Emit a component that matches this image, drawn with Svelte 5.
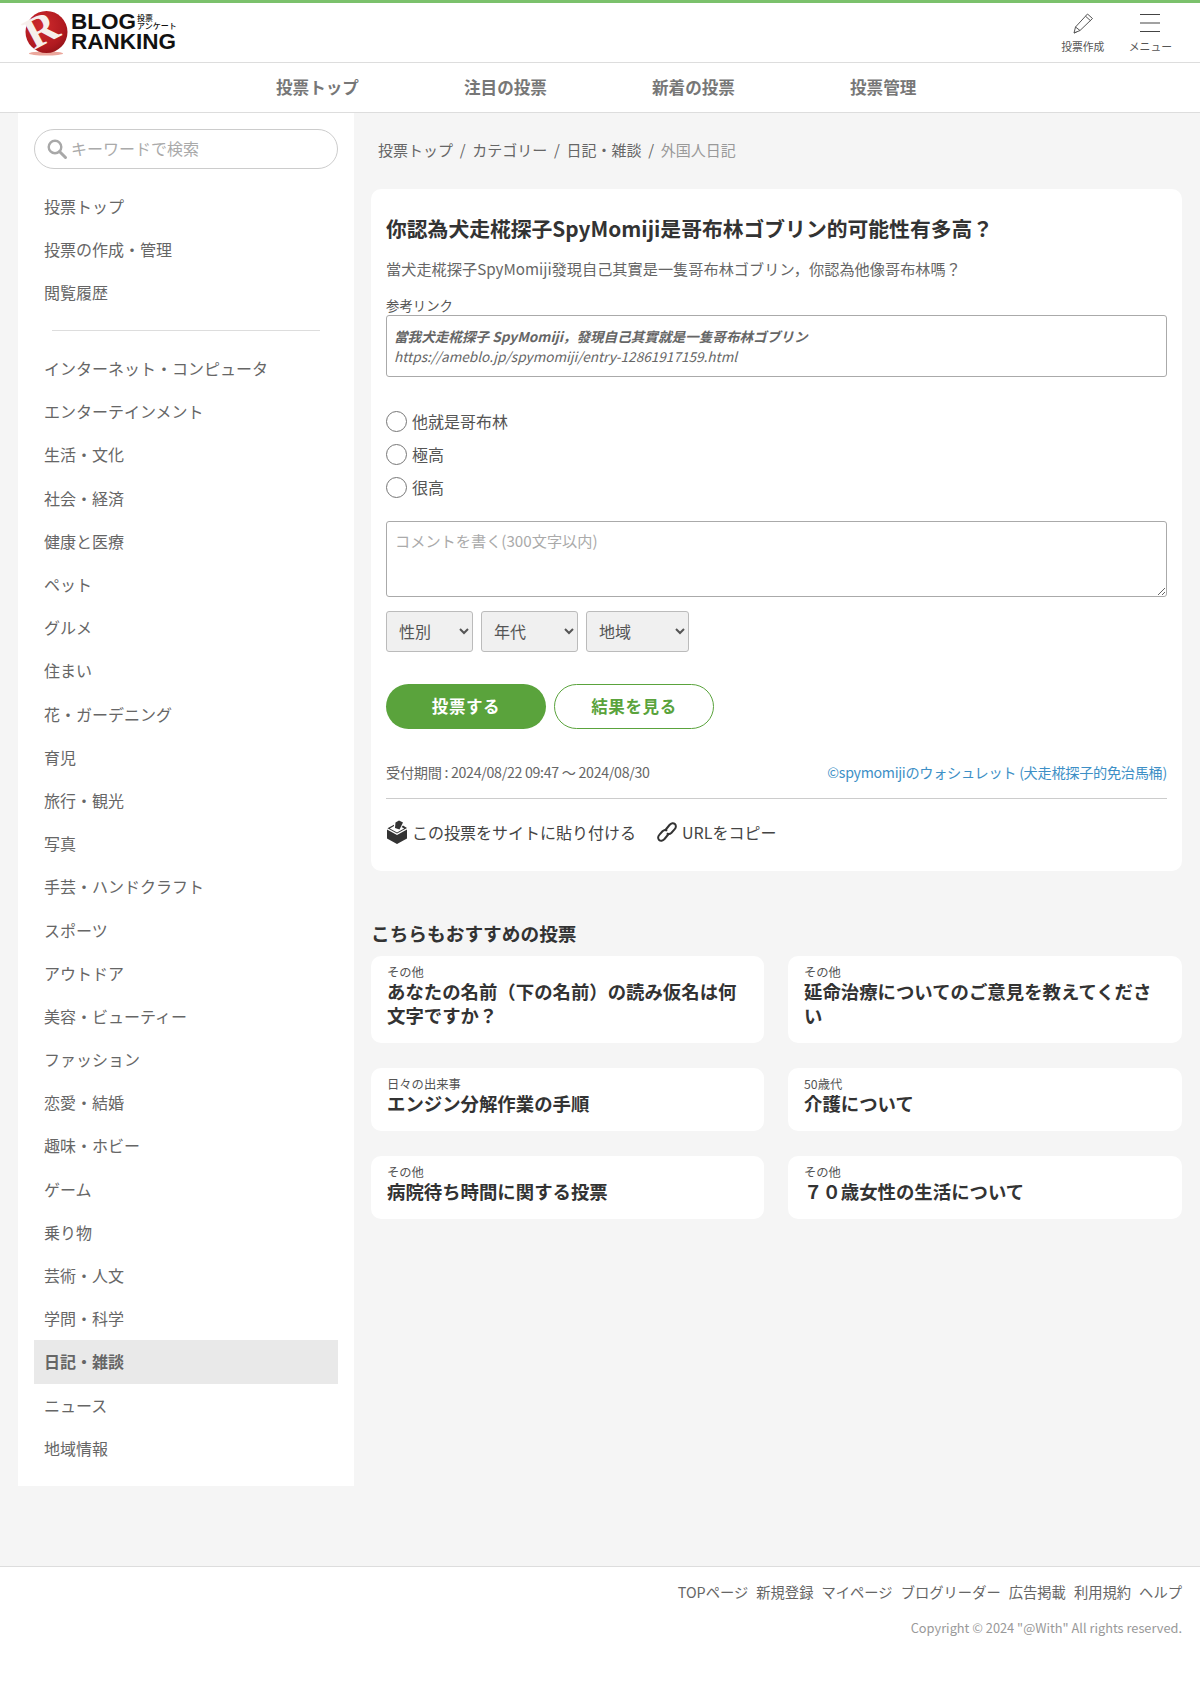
<script lang="ts">
  const navItems = ["投票トップ", "注目の投票", "新着の投票", "投票管理"];
  const topLinks = ["投票トップ", "投票の作成・管理", "閲覧履歴"];
  const categories = [
    "インターネット・コンピュータ", "エンターテインメント", "生活・文化", "社会・経済", "健康と医療", "ペット", "グルメ", "住まい",
    "花・ガーデニング", "育児", "旅行・観光", "写真", "手芸・ハンドクラフト", "スポーツ", "アウトドア", "美容・ビューティー",
    "ファッション", "恋愛・結婚", "趣味・ホビー", "ゲーム", "乗り物", "芸術・人文", "学問・科学", "日記・雑談", "ニュース", "地域情報",
  ];
  const choices = ["他就是哥布林", "極高", "很高"];
  const selects = [
    { label: "性別", cls: "narrow" },
    { label: "年代", cls: "mid" },
    { label: "地域", cls: "wide" },
  ];
  const related = [
    { cat: "その他", title: "あなたの名前（下の名前）の読み仮名は何文字ですか？" },
    { cat: "その他", title: "延命治療についてのご意見を教えてください" },
    { cat: "日々の出来事", title: "エンジン分解作業の手順" },
    { cat: "50歳代", title: "介護について" },
    { cat: "その他", title: "病院待ち時間に関する投票" },
    { cat: "その他", title: "７０歳女性の生活について" },
  ];
  const footerLinks = ["TOPページ", "新規登録", "マイページ", "ブログリーダー", "広告掲載", "利用規約", "ヘルプ"];
</script>

<div class="page">
  <header class="top">
    <a class="logo" href="#top">
      <svg class="ball" width="46" height="46" viewBox="0 0 46 46" aria-hidden="true">
        <defs>
          <radialGradient id="ball" cx="0.4" cy="0.35" r="0.75">
            <stop offset="0" stop-color="#cf2a2c" />
            <stop offset="0.7" stop-color="#b01a20" />
            <stop offset="1" stop-color="#8d1116" />
          </radialGradient>
        </defs>
        <ellipse cx="22" cy="43.500" rx="17" ry="2" fill="#eba79c" />
        <circle cx="22.500" cy="22" r="21" fill="url(#ball)" />
        <text x="0" y="0" transform="translate(10 40) rotate(-28)" class="mark">R</text>
      </svg>
      <span class="wordmark">
        <span class="line1">BLOG<span class="tiny"><span>投票</span><span>アンケート</span></span></span>
        <span class="line2">RANKING</span>
      </span>
    </a>
    <div class="tools">
      <a class="tool" href="#create">
        <svg width="22" height="22" viewBox="0 0 22 22" fill="none" stroke="#555" stroke-width="1" aria-hidden="true">
          <path d="M2 21l1.500-6L15.500 2l5 4.500L8 18.500z" />
          <path d="M3.500 15L8 18.500M13.500 4.200l5 4.500" />
          <path d="M2 21l2.500-1" />
        </svg>
        <span>投票作成</span>
      </a>
      <a class="tool menu" href="#menu">
        <svg width="20" height="22" viewBox="0 0 20 22" stroke="#444" stroke-width="1.100" aria-hidden="true">
          <path d="M0 2.500h20M0 11h20M0 19.500h20" />
        </svg>
        <span>メニュー</span>
      </a>
    </div>
  </header>

  <nav class="gnav">
    {#each navItems as item}
      <a href="#nav">{item}</a>
    {/each}
  </nav>

  <div class="body">
    <aside class="side">
      <div class="search">
        <svg width="22" height="22" viewBox="0 0 22 22" fill="none" stroke="#a8a8a8" aria-hidden="true">
          <circle cx="9" cy="9" r="6.300" stroke-width="2.400" />
          <path d="M13.500 13.500l6 6" stroke-width="3" stroke-linecap="round" />
        </svg>
        <span>キーワードで検索</span>
      </div>
      <ul class="links">
        {#each topLinks as link}
          <li>{link}</li>
        {/each}
      </ul>
      <hr />
      <ul class="links">
        {#each categories as cat}
          <li class:active={cat === "日記・雑談"}>{cat}</li>
        {/each}
      </ul>
    </aside>

    <main class="main">
      <div class="crumbs">
        <a href="#c">投票トップ</a><i>/</i><a href="#c">カテゴリー</a><i>/</i><a href="#c">日記・雑談</a><i>/</i><span>外国人日記</span>
      </div>

      <section class="card">
        <h1>你認為犬走椛探子SpyMomiji是哥布林ゴブリン的可能性有多高？</h1>
        <p class="desc">當犬走椛探子SpyMomiji發現自己其實是一隻哥布林ゴブリン，你認為他像哥布林嗎？</p>
        <div class="ref-label">参考リンク</div>
        <div class="ref">
          <b>當我犬走椛探子 SpyMomiji，發現自己其實就是一隻哥布林ゴブリン</b>
          <span>https://ameblo.jp/spymomiji/entry-12861917159.html</span>
        </div>

        <div class="choices">
          {#each choices as c}
            <label><input type="radio" name="vote" />{c}</label>
          {/each}
        </div>

        <textarea placeholder="コメントを書く(300文字以内)"></textarea>

        <div class="selects">
          {#each selects as s}
            <select class={s.cls}><option>{s.label}</option></select>
          {/each}
        </div>

        <div class="buttons">
          <button class="vote">投票する</button>
          <button class="result">結果を見る</button>
        </div>

        <div class="meta">
          <span>受付期間 : 2024/08/22 09:47 〜 2024/08/30</span>
          <a href="#owner">©spymomijiのウォシュレット (犬走椛探子的免治馬桶)</a>
        </div>

        <div class="share">
          <span class="share-item">
            <svg width="22" height="24" viewBox="0 0 22 24" aria-hidden="true">
              <path d="M1 9.500l10 5.500 10-5.500v9L11 24 1 18.500z" fill="#333" />
              <path d="M1.500 8.300L8 4.700V6L3.800 8.400l7.200 4 7.200-4-2.700-1.500L17 5.400 21 8l-10 5.600z" fill="#333" />
              <path d="M9 8l.5-5.500L13 .5l4 2-3.500 7z" fill="#333" />
            </svg>
            この投票をサイトに貼り付ける
          </span>
          <span class="share-item">
            <svg width="22" height="22" viewBox="0 0 22 22" fill="none" stroke="#333" stroke-width="2" aria-hidden="true">
              <path d="M9 9.500l4.500-5.500c1.800-2 4-2.200 5.400-.9s1.300 3.500-.4 5.300l-3 3.300c-1.500 1.500-3.300 1.700-4.600.5" />
              <path d="M13 12.500L8.500 18c-1.800 2-4 2.200-5.400.9s-1.300-3.500.4-5.300l3-3.300c1.500-1.500 3.300-1.700 4.600-.5" />
            </svg>
            URLをコピー
          </span>
        </div>
      </section>

      <h2>こちらもおすすめの投票</h2>
      <div class="related">
        {#each related as r}
          <article>
            <small>{r.cat}</small>
            <h3>{r.title}</h3>
          </article>
        {/each}
      </div>
    </main>
  </div>

  <footer class="foot">
    <div class="foot-links">
      {#each footerLinks as l}
        <a href="#f">{l}</a>
      {/each}
    </div>
    <div class="copy">Copyright © 2024 "@With" All rights reserved.</div>
  </footer>
</div>

<style>
  :global(body) {
    margin: 0;
    background: #fff;
  }
  .page {
    height: 1685px;
    background: #f5f5f5;
    color: #555;
    font-family: "Noto Sans CJK JP", "Noto Sans", sans-serif;
    font-size: 15px;
    overflow: hidden;
  }
  a {
    color: inherit;
    text-decoration: none;
  }
  .top {
    height: 59px;
    display: flex;
    align-items: flex-start;
    justify-content: space-between;
    padding: 0 24px;
    background: #fff;
    border-top: 3px solid #7bc16c;
    border-bottom: 1px solid #ddd;
  }
  .logo {
    display: flex;
    align-items: flex-start;
    gap: 2px;
    padding-top: 7px;
  }
  .ball {
    overflow: visible;
  }
  .mark {
    font-family: "Liberation Serif", serif;
    font-size: 44px;
    font-weight: 700;
    fill: #f6efec;
  }
  .wordmark {
    display: flex;
    flex-direction: column;
    color: #111;
    font-family: "Liberation Sans", sans-serif;
    font-weight: 700;
    margin-top: 2px;
    margin-left: -1px;
  }
  .line1 {
    display: flex;
    align-items: center;
    font-size: 22.500px;
    line-height: 20px;
    height: 20px;
  }
  .line2 {
    font-size: 22.500px;
    line-height: 20px;
    height: 20px;
  }
  .tiny {
    display: flex;
    flex-direction: column;
    margin-left: 1px;
    font-family: "Noto Sans CJK JP", sans-serif;
    font-size: 8px;
    font-weight: 500;
    line-height: 8px;
  }
  .tools {
    display: flex;
    gap: 24.500px;
    margin-right: 4px;
  }
  .tool {
    display: flex;
    flex-direction: column;
    align-items: center;
    gap: 5px;
    padding-top: 9px;
    font-size: 10.800px;
    line-height: 14px;
    color: #555;
  }
  .gnav {
    height: 50px;
    display: flex;
    align-items: center;
    padding-left: 276px;
    gap: 23px;
    padding-bottom: 1px;
    box-sizing: border-box;
    background: #fff;
    border-bottom: 1px solid #ddd;
  }
  .gnav a {
    width: 165px;
    font-size: 16.600px;
    font-weight: 700;
    color: #777;
  }
  .gnav a:nth-child(4) {
    margin-left: 10px;
  }
  .body {
    display: flex;
    align-items: flex-start;
    padding-left: 18px;
  }
  .side {
    width: 336px;
    box-sizing: border-box;
    height: 1373px;
    padding: 16px 16px 0;
    background: #fff;
  }
  .search {
    height: 40px;
    box-sizing: border-box;
    display: flex;
    align-items: center;
    gap: 3px;
    padding-left: 11px;
    border: 1px solid #ccc;
    border-radius: 20px;
    color: #aaa;
    font-size: 16px;
  }
  .search span {
    padding-bottom: 2px;
  }
  .links {
    list-style: none;
    margin: 0;
    padding: 0;
  }
  .side > .links:first-of-type {
    margin-top: 16px;
  }
  .links li {
    height: 43.200px;
    line-height: 43px;
    padding-left: 10px;
    color: #666;
    font-size: 16px;
  }
  .links li.active {
    background: #e9e9e9;
    font-weight: 700;
  }
  hr {
    margin: 15px 18px 16.500px 18px;
    border: 0;
    border-top: 1px solid #ddd;
  }
  .main {
    width: 811px;
    margin-left: 17px;
  }
  .crumbs {
    height: 76px;
    box-sizing: border-box;
    padding: 25px 0 0 7px;
    line-height: 24px;
    color: #666;
  }
  .crumbs i {
    font-style: normal;
    margin: 0 6.700px;
  }
  .crumbs span {
    color: #999;
  }
  .card {
    height: 682px;
    box-sizing: border-box;
    padding: 21px 15px 0;
    background: #fff;
    border-radius: 10px;
  }
  h1 {
    margin: 0;
    font-size: 20.800px;
    line-height: 36px;
    font-weight: 700;
    color: #333;
  }
  .desc {
    margin: 10px 0 0;
    font-size: 15.200px;
    line-height: 24px;
    color: #666;
  }
  .ref-label {
    margin-top: 15.500px;
    font-size: 13.400px;
    line-height: 19.500px;
    color: #555;
  }
  .ref {
    box-sizing: border-box;
    height: 62px;
    display: flex;
    flex-direction: column;
    justify-content: center;
    padding: 0 7px;
    border: 1px solid #aaa;
    border-radius: 3px;
    font-size: 13.600px;
    font-style: italic;
    line-height: 20px;
    color: #666;
  }
  .choices {
    display: flex;
    flex-direction: column;
    margin-top: 27px;
  }
  .choices label {
    display: flex;
    align-items: center;
    gap: 5px;
    height: 33.300px;
    font-size: 16px;
    color: #555;
  }
  .choices input {
    width: 21px;
    height: 21px;
    margin: 1px 0 0;
    flex: none;
  }
  textarea {
    display: block;
    width: 100%;
    height: 76px;
    box-sizing: border-box;
    margin-top: 17px;
    padding: 7px 8px;
    border: 1px solid #aaa;
    border-radius: 3px;
    background: #fff;
    font: inherit;
    font-size: 15.200px;
    line-height: 22px;
    outline: none;
  }
  textarea::placeholder {
    color: #aaa;
  }
  .selects {
    display: flex;
    gap: 8px;
    margin-top: 14px;
  }
  select {
    height: 41px;
    padding: 0 0 0 8px;
    border: 1px solid #bbb;
    border-radius: 3px;
    background: #f0f0f0;
    color: #555;
    font: inherit;
    font-size: 16px;
  }
  .narrow {
    width: 87px;
  }
  .mid {
    width: 97px;
  }
  .wide {
    width: 103px;
  }
  .buttons {
    display: flex;
    gap: 8px;
    margin-top: 32px;
  }
  .buttons button {
    width: 160px;
    height: 45px;
    border-radius: 23px;
    font: inherit;
    font-size: 16.500px;
    font-weight: 700;
    letter-spacing: 0.6px;
    cursor: pointer;
  }
  .vote {
    border: 0;
    background: #5aa33c;
    color: #fff;
  }
  .result {
    border: 1px solid #5aa33c;
    background: #fff;
    color: #5aa33c;
  }
  .meta {
    display: flex;
    justify-content: space-between;
    margin-top: 32px;
    padding-bottom: 15px;
    border-bottom: 1px solid #ccc;
    font-size: 14.200px;
    line-height: 22px;
    letter-spacing: -0.3px;
    color: #666;
  }
  .meta a {
    color: #3d8fc6;
  }
  .share {
    display: flex;
    gap: 20px;
    margin-top: 21px;
    color: #444;
    font-size: 16px;
  }
  .share-item {
    display: flex;
    align-items: center;
    gap: 4px;
    line-height: 24px;
  }
  h2 {
    margin: 49px 0 0;
    font-size: 18.700px;
    line-height: 26px;
    font-weight: 700;
    color: #333;
  }
  .related {
    display: grid;
    grid-template-columns: 393px 394px;
    gap: 25px 24px;
    margin-top: 10px;
  }
  .related article {
    box-sizing: border-box;
    padding: 10px 16px 16.500px;
    background: #fff;
    border-radius: 10px;
  }
  .related small {
    display: block;
    font-size: 12.300px;
    line-height: 12.500px;
    color: #555;
  }
  .related h3 {
    margin: 0;
    font-size: 18.400px;
    line-height: 24px;
    font-weight: 700;
    color: #333;
  }
  .foot {
    margin-top: 80px;
    height: 120px;
    box-sizing: border-box;
    padding: 13px 18px 0;
    background: #fff;
    border-top: 1px solid #ddd;
    text-align: right;
  }
  .foot-links {
    display: flex;
    justify-content: flex-end;
    gap: 8px;
    font-size: 14.300px;
    line-height: 24px;
    color: #666;
  }
  .copy {
    margin-top: 12px;
    font-size: 12.800px;
    line-height: 24px;
    color: #999;
  }
</style>
